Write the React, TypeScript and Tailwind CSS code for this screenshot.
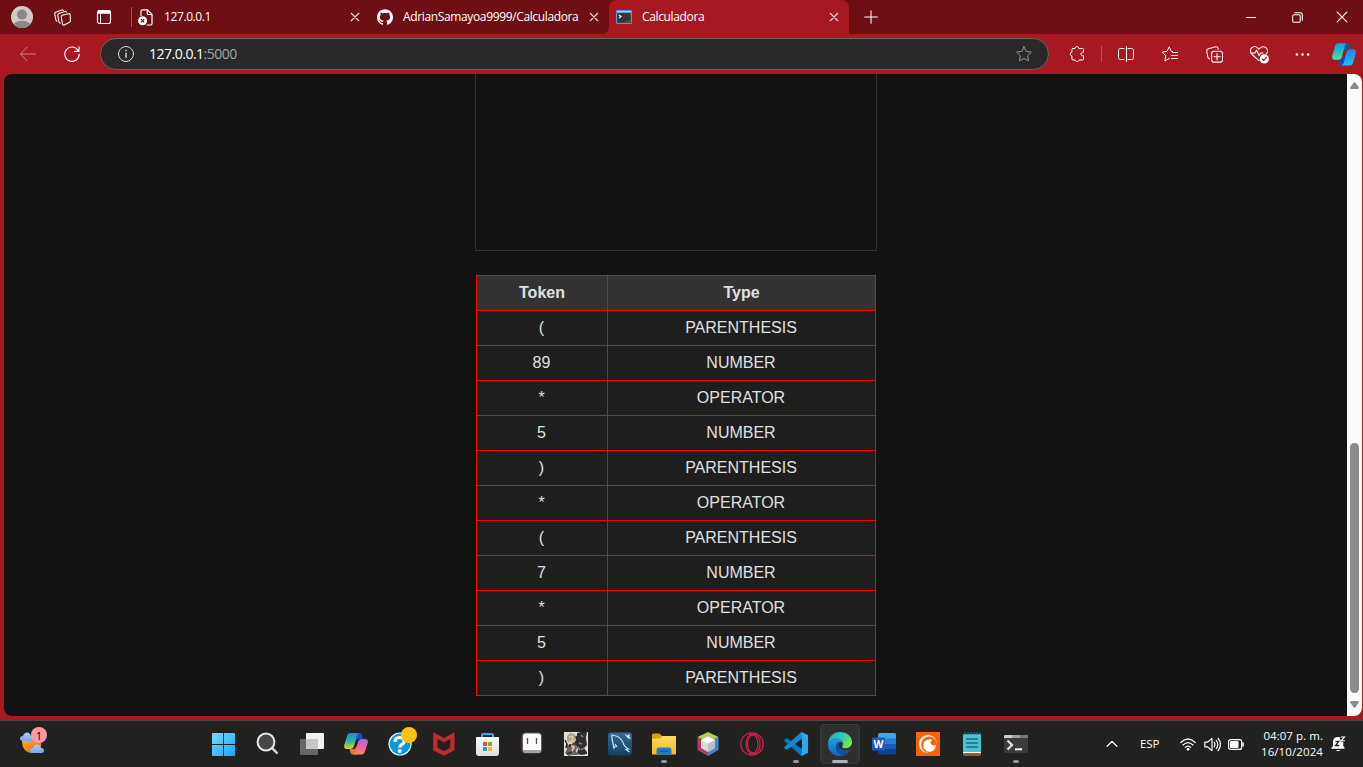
import React from 'react';
import { SiGithub, SiCrunchyroll } from 'react-icons/si';

const tokens: [string, string][] = [
  ['(', 'PARENTHESIS'],
  ['89', 'NUMBER'],
  ['*', 'OPERATOR'],
  ['5', 'NUMBER'],
  [')', 'PARENTHESIS'],
  ['*', 'OPERATOR'],
  ['(', 'PARENTHESIS'],
  ['7', 'NUMBER'],
  ['*', 'OPERATOR'],
  ['5', 'NUMBER'],
  [')', 'PARENTHESIS'],
];

type IconProps = { size?: number; className?: string; children: React.ReactNode };

/* Line icon on a 16 unit grid */
function Line({ size = 16, className = '', children }: IconProps) {
  return (
    <svg width={size} height={size} viewBox="0 0 16 16" fill="none" stroke="currentColor" strokeWidth="1" strokeLinecap="round" strokeLinejoin="round" className={`shrink-0 ${className}`}>
      {children}
    </svg>
  );
}

/* Application icon on a 24 unit grid */
function App24({ children }: { children: React.ReactNode }) {
  return (
    <svg width="24" height="24" viewBox="0 0 24 24" className="block shrink-0">
      {children}
    </svg>
  );
}

function Close() {
  return (
    <Line size={10} className="text-[#f3e6e7]">
      <path d="M2 2l12 12M14 2L2 14" strokeWidth="1.7" />
    </Line>
  );
}

function Cell({ className, children }: { className: string; children: React.ReactNode }) {
  return <div className={`flex shrink-0 items-center justify-center ${className}`}>{children}</div>;
}

function TabStrip() {
  return (
    <div className="flex h-[34px] items-center bg-[#6e0f16] text-xs text-white">
      <Cell className="w-11">
        <svg width="22" height="22" viewBox="0 0 22 22">
          <clipPath id="face"><circle cx="11" cy="11" r="11" /></clipPath>
          <g clipPath="url(#face)">
            <rect width="22" height="22" fill="#cfcdca" />
            <circle cx="11" cy="8.6" r="5" fill="#8b8883" />
            <ellipse cx="11" cy="19.5" rx="8.5" ry="4.7" fill="#8b8883" />
          </g>
        </svg>
      </Cell>
      <Cell className="w-9">
        <Line size={17}>
          <path d="M7.6 5.9l6-1.500c.8-.2 1.400.2 1.600.9l.3 5.600c0 .7-.3 1.200-1 1.500l-4.800 2.700c-.8.4-1.600 0-1.700-.9l-1.200-6.900c-.1-.7 0-1.200.8-1.400z" />
          <path d="M5.800 13.300c-.6 0-1-.3-1.100-.9L3.600 6c-.1-.8.2-1.400.9-1.700l5.800-1.900c.6-.2 1.100 0 1.400.5" />
          <path d="M2.800 11.600c-.5 0-.8-.3-.9-.8L.7 4.800c-.1-.8.2-1.400.9-1.700L7.200.9c.7-.3 1.200-.1 1.500.4" />
        </Line>
      </Cell>
      <Cell className="w-12">
        <Line size={16}>
          <rect x="1.500" y="1.500" width="13" height="13" rx="2" strokeWidth="1.200" />
          <path d="M1.500 3.500h13M2 2.500h12" strokeWidth="2.400" strokeLinecap="butt" />
          <path d="M4.500 4.500v10" />
        </Line>
      </Cell>
      <div className="ml-[3px] h-5 w-px bg-[#a0575c]" />
      <div className="ml-[6px] flex w-[463px] items-center">
        <svg width="15" height="17" viewBox="0 0 15 17" fill="none" stroke="white" strokeWidth="1.200" className="shrink-0">
          <path d="M3 7V2.200C3 1.300 3.600.8 4.400.8h5L14 5.400v9c0 1-.6 1.600-1.500 1.600H8.500M9.300.8v3.800c0 .6.300.9.9.9H14" />
          <circle cx="4.600" cy="11.800" r="4.500" fill="white" stroke="none" />
          <path d="M3 10.200l3.200 3.200M6.200 10.200L3 13.400" stroke="#6e0f16" />
        </svg>
        <span className="ml-[11px] w-[186px] whitespace-nowrap tracking-[-0.4px]">127.0.0.1</span>
        <Close />
        <SiGithub size={16} className="ml-[17px] shrink-0" />
        <span className="ml-[10px] w-[186px] whitespace-nowrap tracking-[-0.36px]">AdrianSamayoa9999/Calculadora</span>
        <Close />
      </div>
      <svg width="8" height="8" viewBox="0 0 8 8" className="shrink-0 self-end"><path d="M8 0v8H0q8 0 8-8z" fill="#a81820" /></svg>
      <div className="flex h-[34px] w-[240px] items-center rounded-t-lg bg-[#a81820] pl-[7px]">
        <svg width="16" height="14" viewBox="0 0 16 14" className="shrink-0">
          <rect width="16" height="14" rx="1" fill="#5f93cf" />
          <path d="M1 1h14v1.300H1z" fill="#a9c9ee" />
          <rect x="1.200" y="3" width="13.600" height="9.800" fill="#333536" />
          <path d="M15 3v6L5 13h10z" fill="#4b4e4f" />
          <path d="M3 5l2 1.500L3 8" fill="none" stroke="white" strokeWidth="1.200" />
        </svg>
        <span className="ml-[10px] w-[187px] whitespace-nowrap tracking-[-0.36px]">Calculadora</span>
        <Close />
      </div>
      <Cell className="w-[43px]">
        <Line size={14}><path d="M8 .8v14.400M.8 8h14.400" strokeWidth="1.200" /></Line>
      </Cell>
      <div className="ml-auto flex">
        <Cell className="w-[46px]"><div className="h-px w-[10px] bg-white" /></Cell>
        <Cell className="w-[46px]">
          <Line size={11}>
            <rect x="1" y="4" width="11" height="11" rx="2" strokeWidth="1.500" />
            <path d="M4 1h8c2 0 3 1 3 3v8" strokeWidth="1.500" />
          </Line>
        </Cell>
        <Cell className="w-[43px] pl-px">
          <Line size={12}><path d="M1.500 1.500l13 13M14.500 1.500l-13 13" strokeWidth="1.500" /></Line>
        </Cell>
      </div>
    </div>
  );
}

function CopilotEdge() {
  return (
    <svg width="24" height="23" viewBox="0 0 24 23" className="shrink-0">
      <defs>
        <linearGradient id="ceA" x1="0" y1="0" x2="0" y2="1"><stop stopColor="#159ddd" /><stop offset=".55" stopColor="#21c3c5" /><stop offset="1" stopColor="#66dc85" /></linearGradient>
        <linearGradient id="ceB" x1="0" y1="0" x2="0" y2="1"><stop stopColor="#2c7be8" /><stop offset="1" stopColor="#19c4f7" /></linearGradient>
      </defs>
      <path d="M11 .3h4.300c1.500 0 2.300.9 2.700 2.200L19 6.500h-3.500c-2 0-3 1-3.600 3L9.500 9z" fill="#0a5c94" />
      <path d="M13.500 22.500H9.800c-1.500 0-2.500-.9-2.900-2.200L6 16.300h2.500c2 0 3-1 3.500-3l2.500-2z" fill="#1549bd" />
      <path d="M6.500.3h9c-1.500 0-2.500 1.200-3 3L10 13.500c-.7 2.300-1.700 3.300-3.700 3.300H3C.6 16.800-.4 15 .3 12.400L3 3.200C3.600 1.200 4.700.3 6.500.3z" fill="url(#ceA)" />
      <path d="M17.800 22.500h-9c1.500 0 2.500-1.200 3-3l2.500-9.500c.7-2.500 1.700-3.800 3.700-3.800h3.300c2.400 0 3.100 1.800 2.400 4.200L21.200 19.500c-.6 2-1.600 3-3.400 3z" fill="url(#ceB)" />
    </svg>
  );
}

function Toolbar() {
  return (
    <div className="flex h-10 items-center bg-[#a81820] text-white">
      <Cell className="w-14">
        <Line size={16} className="text-[#d77d82]"><path d="M15.500 8H.5M7 1.200L.5 8 7 14.800" /></Line>
      </Cell>
      <Cell className="w-8">
        <Line size={16}><path d="M14.300 4.700A7.200 7.200 0 1 0 15.200 8M15 .8v4.500h-4.500" strokeWidth="1.150" /></Line>
      </Cell>
      <div className="ml-3 flex h-8 w-[949px] items-center rounded-full border border-[#6c6261] bg-[#292929] pl-[17px] pr-4">
        <Line size={16} className="text-[#d9d9d9]">
          <circle cx="8" cy="8" r="7.500" />
          <path d="M8 7.300v4M8 4.300v.5" strokeWidth="1.400" />
        </Line>
        <span className="-mt-px ml-[15px] whitespace-nowrap text-[14px] tracking-[-0.5px]">127.0.0.1<span className="text-[#a3a3a3]">:5000</span></span>
        <Line size={16} className="ml-auto text-[#929292]">
          <path d="M8 .7l2.200 4.700 5.200.7-3.800 3.600.9 5.200L8 12.400l-4.600 2.500.9-5.200L.6 6.100l5.200-.7z" />
        </Line>
      </div>
      <Cell className="w-14">
        <Line size={16}>
          <path d="M3.500 2.500H6a1.900 1.900 0 0 1 3.800 0h3.700c.6 0 1 .4 1 1V6.200a1.900 1.900 0 1 0 0 3.600v3.200c0 .6-.4 1-1 1h-3.300c-.3 1-1 1.500-1.900 1.500s-1.700-.5-2-1.500H3.900c-.6 0-1-.4-1-1v-3a2.050 2.050 0 0 1 0-4v-2.500q0-1 1-1z" />
        </Line>
      </Cell>
      <div className="-ml-1 h-4 w-px bg-[#c64850]" />
      <Cell className="w-[47px]">
        <Line size={16}>
          <path d="M6 2.500H2.500C1.300 2.500.5 3.300.5 4.300v7.400c0 1 .8 1.800 2 1.800H6M10 2.500h3.500c1.200 0 2 .8 2 1.800v7.400c0 1-.8 1.800-2 1.800H10M8.500.5v15" />
        </Line>
      </Cell>
      <Cell className="w-[42px]">
        <Line size={16}>
          <path d="M10.500 5.500H9.400L7.200.8 5.100 5.300l-4.800.8 3.500 3.600-.9 5.200 4.600-2.500M10.500 6.500h5M9.500 9.500h6M9.500 12.500h6" />
        </Line>
      </Cell>
      <Cell className="w-[46px]">
        <Line size={17}>
          <rect x="5.300" y="5" width="10.200" height="10.200" rx="2" />
          <path d="M10.400 7.200v5.800M7.500 10.100h5.800M3.500 12.200C2.300 12 1.900 11.300 1.700 10.300L.7 4.800c-.2-1.200.4-2 1.500-2.300L9 .8c1.300-.3 2.100.2 2.400 1.400l.2.800" />
        </Line>
      </Cell>
      <Cell className="w-11">
        <Line size={19}>
          <path d="M7.500 13.200L2 8.200C-.1 6.100.2 3.800 1.400 2.500 2.900 1 5.100 1.100 6.600 2.600l.9.900.9-.9c1.500-1.500 3.700-1.600 5.200-.1 1.300 1.300 1.500 3.600 0 5.200M.8 6.800h3.400l1.400-2.500 2 4.500 1.300-2h2" strokeWidth=".9" />
          <circle cx="12" cy="11.700" r="3.900" fill="white" stroke="none" />
          <path d="M10.300 11.900l1.200 1.100 2.300-2.500" stroke="#a81820" />
        </Line>
      </Cell>
      <Cell className="w-[42px]">
        <Line size={15}>
          <g fill="currentColor" stroke="none"><circle cx="2" cy="8" r="1.300" /><circle cx="8" cy="8" r="1.300" /><circle cx="14" cy="8" r="1.300" /></g>
        </Line>
      </Cell>
      <div className="ml-auto mr-[7px]"><CopilotEdge /></div>
    </div>
  );
}

function TokenTable() {
  return (
    <div className="mt-6 flex w-[400px] flex-col border border-[#ff0000] font-['Liberation_Sans',Arial,sans-serif] text-base leading-[18px] text-[#e0e0e0]">
      <div className="flex h-[34px] bg-[#333333] font-bold">
        <Cell className="w-[131px] border-r border-[#ff0000] pl-px">Token</Cell>
        <Cell className="w-[267px] pl-px">Type</Cell>
      </div>
      {tokens.map(([token, type], i) => (
        <div key={i} className="flex h-[35px] border-t border-[#ff0000] bg-[#1e1e1e]">
          <Cell className="w-[131px] border-r border-[#ff0000]">{token}</Cell>
          <Cell className="w-[267px]">{type}</Cell>
        </div>
      ))}
    </div>
  );
}

function Page() {
  return (
    <div className="flex h-[646px] bg-[#a81820] pb-1 pl-1 pr-px">
      <div className="flex flex-1 overflow-hidden rounded-lg bg-[#121212]">
        <div className="flex w-[1343px] flex-col items-center">
          <div className="h-[177px] w-[402px] border border-t-0 border-[#333333]" />
          <TokenTable />
        </div>
        <div className="flex w-[15px] flex-col items-center bg-[#fcfcfc] pt-2">
          <svg width="9" height="7" viewBox="0 0 9 7"><path d="M3.500.7q1-1 2 0L8.800 5.500Q9 7 7.800 7H1.200Q0 7 .2 5.500z" fill="#8b8b8b" /></svg>
          <div className="mt-[354px] h-[250px] w-[9px] rounded-full bg-[#8b8b8b]" />
          <svg width="9" height="7" viewBox="0 0 9 7" className="mt-2"><path d="M3.500 6.300q1 1 2 0L8.800 1.500Q9 0 7.800 0H1.200Q0 0 .2 1.500z" fill="#8b8b8b" /></svg>
        </div>
      </div>
    </div>
  );
}

function Task({ run = false, active = false, children }: { run?: boolean; active?: boolean; children: React.ReactNode }) {
  return (
    <div className="flex w-11 shrink-0 justify-center">
      <div className={`flex h-10 w-10 flex-col items-center rounded ${active ? 'border border-[#393939] bg-[#2f2f2f] pt-[7px]' : 'pt-2'}`}>
        {children}
        {(run || active) && <div className={`mt-1 h-[3px] rounded-full ${active ? 'w-4 bg-[#b0b0b0]' : 'w-[6px] bg-[#969696]'}`} />}
      </div>
    </div>
  );
}

function Gradients() {
  return (
    <svg width="0" height="0" className="absolute">
      <defs>
        <linearGradient id="win" x1="0" y1="0" x2="1" y2="1" gradientUnits="objectBoundingBox"><stop stopColor="#72deff" /><stop offset="1" stopColor="#1ba5f8" /></linearGradient>
        <linearGradient id="cpA" x1="0" y1="0" x2="0" y2="1"><stop stopColor="#1588e9" /><stop offset=".5" stopColor="#29b996" /><stop offset="1" stopColor="#f0cb25" /></linearGradient>
        <linearGradient id="cpB" x1="0" y1="0" x2="0" y2="1"><stop stopColor="#a765ef" /><stop offset=".5" stopColor="#ed65a0" /><stop offset="1" stopColor="#fb8567" /></linearGradient>
        <linearGradient id="sun" x1="0" y1="0" x2="1" y2="1"><stop stopColor="#fbb22d" /><stop offset="1" stopColor="#e85a1c" /></linearGradient>
        <linearGradient id="cloud" x1="0" y1="0" x2="0" y2="1"><stop stopColor="#a9cafa" /><stop offset="1" stopColor="#7ba5ec" /></linearGradient>
        <linearGradient id="fold" x1="0" y1="0" x2="0" y2="1"><stop stopColor="#ffda62" /><stop offset="1" stopColor="#f9b91e" /></linearGradient>
        <linearGradient id="mys" x1="0" y1="0" x2="0" y2="1"><stop stopColor="#2d6d9b" /><stop offset="1" stopColor="#16405f" /></linearGradient>
        <linearGradient id="edgeTop" x1="0" y1="0" x2="1" y2=".6"><stop stopColor="#1ca9e2" /><stop offset=".5" stopColor="#32c8b0" /><stop offset="1" stopColor="#75e556" /></linearGradient>
        <linearGradient id="edgeLow" x1="0" y1="0" x2="0" y2="1"><stop stopColor="#1b9de2" /><stop offset="1" stopColor="#0869c7" /></linearGradient>
        <linearGradient id="paper" x1="0" y1="0" x2="0" y2="1"><stop stopColor="#ffffff" /><stop offset="1" stopColor="#dcdcdc" /></linearGradient>
      </defs>
    </svg>
  );
}

function Apps() {
  return (
    <div className="ml-[147px] flex">
      <Task>
        <App24>
          <g fill="url(#win)"><path d="M0 2Q0 1 1 1h10v11H0zM12 1h10q1 0 1 1v10H12zM0 13h11v11H1q-1 0-1-1zM12 13h11v10q0 1-1 1H12z" /></g>
        </App24>
      </Task>
      <Task>
        <App24>
          <path d="M16.500 16.500l4.300 4.300" stroke="#d2d4d6" strokeWidth="2.500" strokeLinecap="round" />
          <circle cx="10" cy="10" r="8.400" fill="#464749" stroke="#e9eaeb" strokeWidth="2" />
        </App24>
      </Task>
      <Task>
        <App24>
          <rect x="0" y="7" width="18" height="16" rx="1" fill="#666" />
          <rect x="6" y="1" width="18" height="16" rx="1" fill="#f1f1f1" />
          <path d="M6 7h12v10H7q-1 0-1-1z" fill="#c7c7c7" />
        </App24>
      </Task>
      <Task>
        <App24>
          <path d="M10 1h5.500c1.300 0 2 .9 2.300 2.200L18.600 7H15c-2 0-2.800 1-3.500 3L9 11z" fill="#1450c9" />
          <path d="M13 22.500H9c-1.400 0-2.200-.9-2.600-2.200L5.500 17H9c2 0 2.800-1 3.500-3l1.500-1z" fill="#ee713a" />
          <path d="M6.500 1h9c-1.400 0-2.200 1.200-2.700 3l-2.600 9.500C9.500 16 8.200 17 6.200 17H3C.6 17-.3 15.200.3 12.800L3 4C3.600 2 4.700 1 6.500 1z" fill="url(#cpA)" />
          <path d="M17.500 22.500h-9c1.500 0 2.300-1 2.800-2.800l2.600-9.500C14.500 8 15.800 7 17.800 7H21c2.400 0 3.300 1.600 2.700 4L21 19.500c-.6 2-1.700 3-3.500 3z" fill="url(#cpB)" />
        </App24>
      </Task>
      <Task>
        <div className="relative h-6 w-6">
          <App24>
            <circle cx="12" cy="12" r="11.600" fill="#edf6fb" />
            <circle cx="12" cy="12" r="10.400" fill="#0d98db" />
            <path d="M7 10C7 6.600 9 5.500 11.500 5.500s4.700 1.200 4.700 3.900c0 3-4.500 3-4.500 6" fill="none" stroke="white" strokeWidth="3.200" />
            <circle cx="11.700" cy="19" r="2" fill="white" />
          </App24>
          <div className="absolute -top-[5px] left-[13px] h-4 w-4 rounded-full bg-[#ffc20e]" />
        </div>
      </Task>
      <Task>
        <App24><path d="M1.200.3L12 6 22.500.3v18L12 23.800 1.200 18.300zM5.500 7v8.700l6.500 3.400 6.300-3.400V7L12 10.300z" fill="#c12b2e" fillRule="evenodd" /></App24>
      </Task>
      <Task>
        <App24>
          <path d="M6 5V3.200Q6 2 7.200 2h8.600Q17 2 17 3.200V5" fill="none" stroke="#29b1ee" strokeWidth="2" />
          <path d="M0 5.500Q0 5 .5 5h22q.5 0 .5.500V21q0 3-3 3H3q-3 0-3-3z" fill="url(#paper)" />
          <path d="M7 10h4v4H7z" fill="#e34f2d" /><path d="M12 10h4v4h-4z" fill="#75b52b" /><path d="M7 15h4v4H7z" fill="#249ddd" /><path d="M12 15h4v4h-4z" fill="#f4b820" />
        </App24>
      </Task>
      <Task>
        <App24>
          <rect x="1.600" y=".6" width="20.400" height="21" rx="4" fill="#675661" />
          <path d="M3 4Q3 1.500 5.500 1.500h13Q21 1.500 21 4v14H3z" fill="#fbfafb" />
          <path d="M3 18h18v.5Q21 21 18.500 21h-13Q3 21 3 18.500z" fill="#9ba3b0" />
          <path d="M7.500 6v6M16.500 6v6" stroke="#584d55" strokeWidth="1.300" />
        </App24>
      </Task>
      <Task>
        <App24>
          <path d="M0 0h24v24H0z" fill="#e6e1da" />
          <path d="M13 1l4-1h6l-1 6 1 7-3 3 3 4v2l-5 1-5-1 1-5-2-4-4 1 1-4 4-2z" fill="#2f2d31" />
          <path d="M3 4l3-3 5 1 1 4-2 4-4 1-3-2z" fill="#b59f87" />
          <path d="M2 12l3 1 5-2 3 4-1 4 2 4H8l-3 1-4-3 2-4z" fill="#6b625c" />
          <path d="M5 5l3-1 1 4M4 11l4-2 3 1M7 14l3 1-2 4" fill="none" stroke="#dccbb6" strokeWidth="1.700" />
          <path d="M1 8l2 4-1 4M8 20l-5 2M12 4l1 5M6 12v3" fill="none" stroke="#2b282a" strokeWidth="1.500" />
          <path d="M17 3l2 2M15 11l3 1M17 18l3-2M14 15l2 3" stroke="#8d857e" strokeWidth="1.500" />
        </App24>
      </Task>
      <Task>
        <App24>
          <rect width="24" height="23" rx="3" y=".5" fill="url(#mys)" />
          <path d="M7.500 14L6 16 4.500 9.500 3.800 5C3 3 4.500 2.500 6.500 3.500c5 1 8 4.500 9.500 9.500.8 1.500 1.500 2.500 4.500 4L18 17.500l3.500 2.500M7 12l2 3" fill="none" stroke="#d2e1ed" strokeWidth="1.200" />
          <path d="M16.500 2l3 1.600 2-1.600v3l1.300 2-3-.8z" fill="#e3edf4" />
        </App24>
      </Task>
      <Task run>
        <App24>
          <path d="M0 3Q0 1.500 1.500 1.500h5.800L10 4h12.500Q24 4 24 5v5H0z" fill="#dfa109" />
          <path d="M0 7.500Q0 6.500 1 6.500h7L10.500 4H23q1 0 1 1v16.500q0 1-1 1H1q-1 0-1-1z" fill="url(#fold)" />
          <path d="M4.500 22.500v-4q0-3 3-3h9q3 0 3 3v4z" fill="#1381dc" />
          <path d="M8 19.300h8" stroke="#0b5cb3" strokeWidth="1.500" strokeLinecap="round" />
        </App24>
      </Task>
      <Task>
        <App24>
          <path d="M12 0l10.500 5L12 12 1.500 5z" fill="#b5ca5d" />
          <path d="M1.500 5L12 10v14L1.500 18z" fill="#b13e60" />
          <path d="M22.500 5L12 10v14l10.500-6z" fill="#4285cc" />
          <path d="M12 4l7 4v8l-7 4-7-4V8z" fill="#d5dbd8" />
          <path d="M12 4.500l6.500 3.700-6.500 3.500-6.500-3.500z" fill="#f8faf6" />
          <path d="M12 11.700l6.800-3.600V16L12 19.800z" fill="#b5c1c8" />
        </App24>
      </Task>
      <Task>
        <App24>
          <g fill="none" stroke="#d81f49" strokeWidth="1.200"><circle cx="12" cy="12" r="11.200" /><ellipse cx="12" cy="12" rx="6" ry="9.600" /><path d="M9 2.500c8-2 11 3 11 9.500s-3 11.500-11 9.500M14 3C9 3 7.500 8 7.500 12s1.500 9 6.500 9" /></g>
        </App24>
      </Task>
      <Task run>
        <App24>
          <path d="M17.500 0L24 3v18l-6.500 3-1-1V1z" fill="#30a8f1" />
          <path d="M17.500 24L.6 9.300q-.8-.8 0-1.600l1.200-1.200q.7-.6 1.500 0L18 17z" fill="#0876bd" />
          <path d="M17.500 0L.6 14.700q-.8.8 0 1.600l1.200 1.200q.7.600 1.500 0L18 7z" fill="#1689d2" />
          <path d="M18 7v10l-6.500-5z" fill="#222" />
        </App24>
      </Task>
      <Task active>
        <App24>
          <path d="M0 11C.8 4.500 5.800 0 12 0c7 0 12 4.700 12 10.300 0 3.600-2.800 6-6.300 6-2.600 0-4-1-3.400-2.100 1.500-2.600.4-7.200-5-7.200C4.700 7 1 9 0 11z" fill="url(#edgeTop)" />
          <path d="M0 12C.2 8.300 4.500 6 8.500 6c4.600 0 7.500 3.200 6.700 6.600-.2-2-1.700-3-3.200-2.600-4 1-5 6-2.500 9.500 1.800 2.500 4 3.500 6.500 3.700C9 26 0 21.500 0 12z" fill="url(#edgeLow)" />
          <path d="M9 11.300c-3.300 5 .3 11.500 7 11.900 3-.9 5.200-3 6.500-5.200.3-.6-.2-.9-.8-.6-5.500 2.300-11.200-.2-11-4.300 0-1.500.8-2.300 1.800-2.800-1.200-.2-2.600 0-3.500 1z" fill="#134f9f" />
        </App24>
      </Task>
      <Task>
        <App24>
          <path d="M6 2.500Q6 1 7.500 1h15Q24 1 24 2.500V7H6z" fill="#41a5ee" /><path d="M6 6.500h18V12H6z" fill="#2b7cd3" /><path d="M6 12h18v5.500H6z" fill="#185abd" /><path d="M6 17h18v4q0 1.500-1.500 1.500h-15Q6 22.500 6 21z" fill="#103f91" />
          <rect x="0" y="5.500" width="13" height="13" rx="1" fill="#1c59bc" />
          <text x="6.500" y="15.800" textAnchor="middle" fontSize="10.500" fontWeight="700" fontFamily="Open Sans, sans-serif" fill="white" textLength="10" lengthAdjust="spacingAndGlyphs">W</text>
        </App24>
      </Task>
      <Task>
        <Cell className="h-6 w-6 bg-[#ff6108] text-white"><SiCrunchyroll size={18} /></Cell>
      </Task>
      <Task>
        <App24>
          <path d="M3 3q0-1 1-1h16q1 0 1 1v17H3z" fill="#52bfd7" />
          <path d="M3 20h18v1.500H3z" fill="#eef4f2" /><path d="M3 21.500h18v1q0 1.500-1.500 1.500h-15Q3 24 3 22.500z" fill="#9b4f1e" />
          <path d="M5 0v3M8 0v3M11 0v3M14 0v3M17 0v3M20 0v3" stroke="#177894" strokeWidth="1.200" />
          <path d="M6.500 7h11M6.500 11h11M6.500 15h11" stroke="#11708c" strokeWidth="1.500" strokeLinecap="round" />
        </App24>
      </Task>
      <Task run>
        <App24>
          <rect y="3" width="24" height="18" rx="1.500" fill="#3b3b3b" />
          <path d="M0 6V4q0-1 1-1h7v3z" fill="#cecece" /><path d="M8 3h8v3H8z" fill="#a0a0a0" /><path d="M16 3h7q1 0 1 1v2h-8z" fill="#777" />
          <path d="M3.500 8.500L8 13l-4.500 4.500" fill="none" stroke="#dedede" strokeWidth="2.300" /><path d="M11 17.300h7" stroke="white" strokeWidth="2" />
        </App24>
      </Task>
    </div>
  );
}

function Taskbar() {
  return (
    <div className="flex h-[47px] items-center border-t border-[#494646] bg-[#212120] text-white">
      <Gradients />
      <div className="relative ml-5 h-[46px] w-[35px] shrink-0">
        <svg width="26" height="24" viewBox="0 0 26 24" className="mt-[10px]">
          <path d="M2 9h19q2 13-9 13Q2 21.500 2 9z" fill="url(#sun)" />
          <path d="M3 10Q0 10 0 7.500 0 5 3 5 4 1.500 7 1.500T11 5q3 0 3 2.500T11 10z" fill="url(#cloud)" />
          <path d="M13 22q-3 0-3-2.500Q10 17 13 17q1-3.500 4-3.500T21 17q3 0 3 2.500T21 22z" fill="url(#cloud)" />
        </svg>
        <div className="absolute left-[11px] top-[6px] flex h-4 w-4 items-center justify-center rounded-full bg-[#ff99a4] text-[11px] leading-none text-black">1</div>
      </div>
      <Apps />
      <div className="ml-auto flex items-center">
        <Cell className="w-6"><Line size={12}><path d="M1.500 11L8 4.500l6.500 6.500" strokeWidth="1.600" /></Line></Cell>
        <span className="ml-4 w-[36px] text-[11.500px] tracking-[-0.1px]">ESP</span>
        <Cell className="w-6">
          <Line size={16}><path d="M.8 6.500q7.200-7 14.400 0M3 9q5-4.800 10 0M5.300 11.400q2.700-2.600 5.400 0" strokeWidth="1.200" /><circle cx="8" cy="13.300" r="1" fill="currentColor" /></Line>
        </Cell>
        <Cell className="w-6">
          <Line size={17}><path d="M.8 5.700h2.700l4-3.500v11.600l-4-3.500H.8zM9.500 5.800q1.500 2.200 0 4.400M11.500 4q3 4 0 8M13.300 2.200q4.400 5.800 0 11.600" strokeWidth="1.100" /></Line>
        </Cell>
        <Cell className="w-6">
          <svg width="16" height="11" viewBox="0 0 16 11"><rect x=".6" y=".6" width="13" height="9.800" rx="2" fill="none" stroke="white" strokeWidth="1.200" /><rect x="2" y="2" width="8.500" height="7" rx=".7" fill="white" /><path d="M15 4v3" stroke="white" strokeWidth="1.600" strokeLinecap="round" /></svg>
        </Cell>
        <div className="ml-[9px] w-[66px] whitespace-nowrap text-right text-[11.500px] leading-4">
          <div className="tracking-[0.05px]">04:07 p. m.</div>
          <div className="tracking-[0.1px]">16/10/2024</div>
        </div>
        <Cell className="ml-2 mr-[17px] w-[15px]">
          <svg width="15" height="16" viewBox="0 0 15 16">
            <path d="M.5 12.800q-.5-.8.2-1.400L2 10V6q0-5 5-5 5.300 0 5.300 5v4l1 1.400q.7.600.2 1.400z" fill="white" /><path d="M5 14h4.500Q7.300 16.500 5 14z" fill="white" />
            <path d="M4.500 5.500h3.300l-3.300 4h3.800" fill="none" stroke="#212120" strokeWidth="1.300" />
            <path d="M8.500 0H15v5.800H9.800z" fill="#212120" /><path d="M9.800 1h3.700L10 4.800h4" fill="none" stroke="white" strokeWidth="1.100" />
          </svg>
        </Cell>
      </div>
    </div>
  );
}

export default function App() {
  return (
    <div className="flex h-[767px] w-[1363px] flex-col overflow-hidden bg-[#a81820] font-['Open_Sans','Noto_Sans',sans-serif]">
      <TabStrip />
      <Toolbar />
      <Page />
      <Taskbar />
    </div>
  );
}
